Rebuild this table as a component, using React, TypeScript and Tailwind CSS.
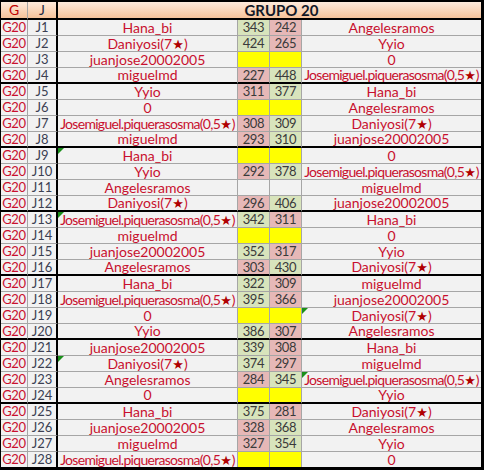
import React from 'react';

type Score = number | null | '';
type Row = [string, Score, Score, string, ('L' | 'R')?];

// null = pending match (yellow), '' = empty cell
const rows: Row[] = [
  ['Hana_bi', 343, 242, 'Angelesramos'],
  ['Daniyosi(7★)', 424, 265, 'Yyio'],
  ['juanjose20002005', null, null, '0'],
  ['miguelmd', 227, 448, 'Josemiguel.piquerasosma(0,5★)'],
  ['Yyio', 311, 377, 'Hana_bi'],
  ['0', null, null, 'Angelesramos'],
  ['Josemiguel.piquerasosma(0,5★)', 308, 309, 'Daniyosi(7★)'],
  ['miguelmd', 293, 310, 'juanjose20002005'],
  ['Hana_bi', null, null, '0', 'L'],
  ['Yyio', 292, 378, 'Josemiguel.piquerasosma(0,5★)'],
  ['Angelesramos', '', '', 'miguelmd'],
  ['Daniyosi(7★)', 296, 406, 'juanjose20002005'],
  ['Josemiguel.piquerasosma(0,5★)', 342, 311, 'Hana_bi', 'L'],
  ['miguelmd', null, null, '0'],
  ['juanjose20002005', 352, 317, 'Yyio'],
  ['Angelesramos', 303, 430, 'Daniyosi(7★)'],
  ['Hana_bi', 322, 309, 'miguelmd'],
  ['Josemiguel.piquerasosma(0,5★)', 395, 366, 'juanjose20002005'],
  ['0', null, null, 'Daniyosi(7★)', 'R'],
  ['Yyio', 386, 307, 'Angelesramos'],
  ['juanjose20002005', 339, 308, 'Hana_bi'],
  ['Daniyosi(7★)', 374, 297, 'miguelmd', 'L'],
  ['Angelesramos', 284, 345, 'Josemiguel.piquerasosma(0,5★)', 'R'],
  ['0', null, null, 'Yyio'],
  ['Hana_bi', 375, 281, 'Daniyosi(7★)'],
  ['juanjose20002005', 328, 368, 'Angelesramos'],
  ['miguelmd', 327, 354, 'Yyio'],
  ['Josemiguel.piquerasosma(0,5★)', null, null, '0'],
];

function Name({ text }: { text: string }) {
  const parts = text.split('★');
  // long names get squeezed a bit so they fill the cell like in the sheet
  const tight = text.length > 20 ? 'tracking-[-0.7px]' : '';
  return (
    <span className={`whitespace-nowrap ${tight}`}>
      {parts[0]}
      {parts.length > 1 && (
        <>
          <span className="text-[#b00000] font-['DejaVu_Sans',sans-serif] text-[13px] tracking-normal">★</span>
          {parts[1]}
        </>
      )}
    </span>
  );
}

function Flag() {
  return (
    <div className="absolute top-0 left-0 w-0 h-0 border-t-[6px] border-t-[#1a8f1a] border-r-[6px] border-r-transparent" />
  );
}

function scoreBg(s: Score, other: Score) {
  if (s === null) return 'bg-[#ffff00]';
  if (s === '' || other === '' || other === null) return '';
  return s > other ? 'bg-[#d8e4bc]' : 'bg-[#e6b8b7]';
}

const head = 'h-[18px] flex items-center justify-center border-b-2 border-b-black bg-linear-to-b from-[#fdebdc] to-[#f6c39a]';

export default function App() {
  return (
    <div className="w-[484px] h-[470px] bg-[#f2f2f2] border-black border-t-2 border-l border-r-[3px] border-b-[3px] font-['Lato',sans-serif] text-[14px] leading-none overflow-hidden">
      <div className="grid grid-cols-[27px_30px_180px_32px_32px_179px]">
        <div className={`${head} border-r border-r-[#a6a6a6] text-[#c00000]`}>G</div>
        <div className={`${head} border-r-2 border-r-black text-[#1f2a44]`}>J</div>
        <div className={`${head} col-span-4 pl-[24px] text-[#111827] font-bold text-[15px]`}>GRUPO 20</div>

        {rows.map(([left, s1, s2, right, flag], i) => {
          const last = i === rows.length - 1;
          const groupEnd = (i + 1) % 4 === 0 && !last;
          const rowCls = last
            ? 'h-[15px]'
            : groupEnd
            ? 'h-[16px] border-b-2 border-b-black'
            : 'h-[16px] border-b border-b-[#a6a6a6]';
          return (
            <React.Fragment key={i}>
              <div className={`${rowCls} flex items-center justify-center border-r border-r-[#a6a6a6] text-[#c8102e] text-[13px] tracking-[-0.3px]`}>
                G20
              </div>
              <div className={`${rowCls} flex items-center justify-center border-r-2 border-r-black text-[#3b3f52] text-[13px]`}>
                J{i + 1}
              </div>
              <div className={`${rowCls} relative flex items-center justify-center overflow-hidden border-r border-r-[#a6a6a6] text-[#c8102e]`}>
                {flag === 'L' && <Flag />}
                <Name text={left} />
              </div>
              <div className={`${rowCls} ${scoreBg(s1, s2)} flex items-center justify-center border-r border-r-[#a6a6a6] text-[#3a3a3a] text-[13px] tracking-[-0.3px]`}>
                {s1 ?? ''}
              </div>
              <div className={`${rowCls} ${scoreBg(s2, s1)} flex items-center justify-center border-r border-r-[#a6a6a6] text-[#3a3a3a] text-[13px] tracking-[-0.3px]`}>
                {s2 ?? ''}
              </div>
              <div className={`${rowCls} relative flex items-center justify-center overflow-hidden text-[#c8102e]`}>
                {flag === 'R' && <Flag />}
                <Name text={right} />
              </div>
            </React.Fragment>
          );
        })}
      </div>
    </div>
  );
}
